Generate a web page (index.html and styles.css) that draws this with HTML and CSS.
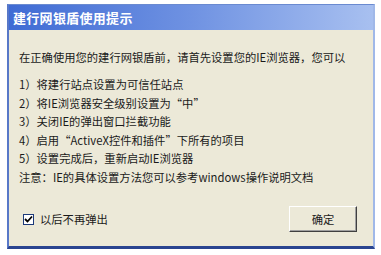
FILE: index.html
```html
<!DOCTYPE html>
<html lang="zh-CN">
<head>
<meta charset="utf-8">
<link rel="stylesheet" href="styles.css">
</head>
<body>
<div class="window">
  <div class="titlebar">建行网银盾使用提示</div>
  <div class="client">
    <p class="intro">在正确使用您的建行网银盾前，请首先设置您的IE浏览器，您可以</p>
    <ul class="steps">
      <li>1）将建行站点设置为可信任站点</li>
      <li>2）将IE浏览器安全级别设置为“中”</li>
      <li>3）关闭IE的弹出窗口拦截功能</li>
      <li>4）启用“ActiveX控件和插件”下所有的项目</li>
      <li>5）设置完成后，重新启动IE浏览器</li>
      <li>注意：IE的具体设置方法您可以参考windows操作说明文档</li>
    </ul>
    <div class="footer">
      <label class="check"><span class="box"><svg width="9" height="9" viewBox="0 0 9 9"><path d="M1 4 L3.5 6.5 L8 1.5" fill="none" stroke="#000" stroke-width="1.8"/></svg></span>以后不再弹出</label>
      <button class="btn">确定</button>
    </div>
  </div>
</div>
</body>
</html>
```
FILE: styles.css
```css
html, body {
  margin: 0;
  padding: 0;
  background: #fff;
}
body {
  padding: 4px 0 0 7px;
  font-family: "Noto Sans CJK SC", "Noto Sans", sans-serif;
}
.window {
  width: 368px;
  height: 245px;
  box-sizing: border-box;
  display: flex;
  flex-direction: column;
  border: 1px solid #6a8ad0;
  border-bottom: 3px solid #2a4590;
  border-left: 2px solid #5878c8;
  border-right: 2px solid #a0b8e8;
  background: #ece9d8;
}
.titlebar {
  height: 25px;
  flex: none;
  background: linear-gradient(to right, #3f6bd4 0%, #6f92e2 50%, #a8c0f0 100%);
  color: #fff;
  font-weight: bold;
  font-size: 13px;
  line-height: 25px;
  padding-left: 4px;
  letter-spacing: 0.3px;
}
.client {
  flex: 1;
  display: flex;
  flex-direction: column;
  padding: 18px 10px 8px 10px;
  color: #1a1a1a;
  font-size: 11.3px;
}
.intro {
  margin: 0;
  line-height: 18px;
}
.steps {
  list-style: none;
  margin: 9px 0 0 0;
  padding: 0;
  line-height: 18.6px;
}
.footer {
  margin-top: auto;
  display: flex;
  align-items: center;
  justify-content: space-between;
  padding-bottom: 6px;
}
.check {
  display: flex;
  align-items: center;
  gap: 6px;
  font-size: 11.3px;
  padding-left: 4px;
}
.box {
  width: 9px;
  height: 9px;
  border: 1px solid #1c3a7a;
  background: #fff;
  display: flex;
  align-items: center;
  justify-content: center;
}
.btn {
  width: 68px;
  height: 26px;
  background: #ece9d8;
  border: 1px solid;
  border-color: #fff #404040 #404040 #fff;
  box-shadow: inset -1px -1px 0 #a0a0a0;
  font-family: inherit;
  font-size: 11.3px;
  color: #1a1a1a;
  padding: 0;
  margin-right: 6px;
}
```
